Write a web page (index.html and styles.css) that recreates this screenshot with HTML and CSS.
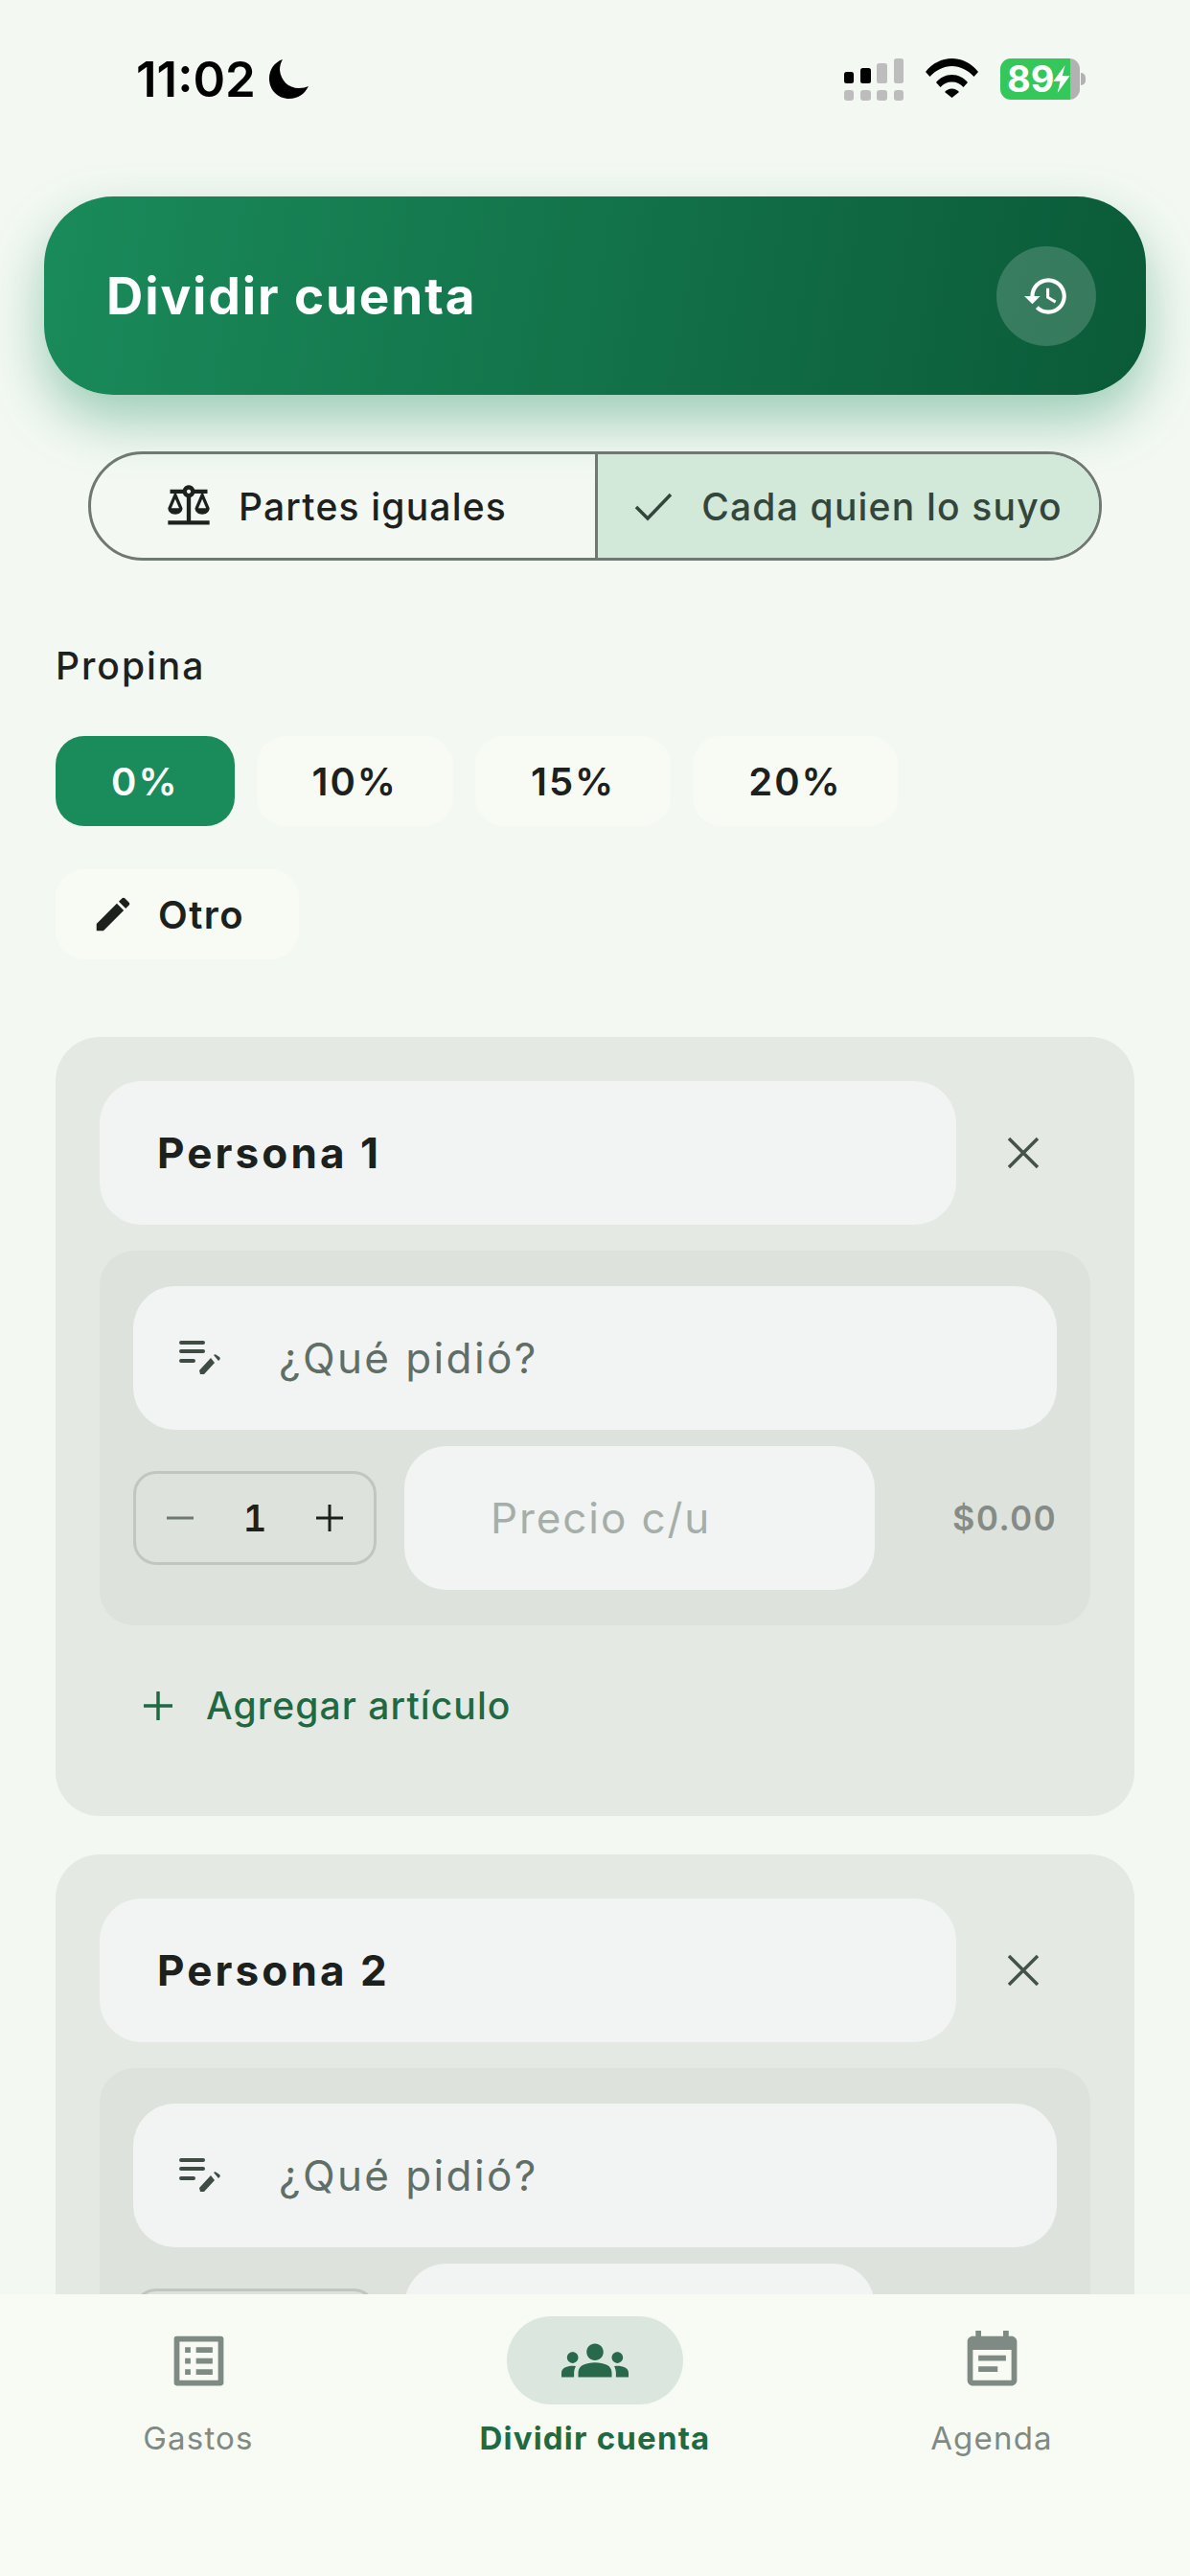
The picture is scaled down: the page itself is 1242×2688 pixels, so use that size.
FILE: index.html
```html
<!DOCTYPE html>
<html>
<head>
    <title>Dividir cuenta</title>
    <link rel="stylesheet" href="styles.css">
</head>
<body>
    <div class="page">
        <div class="status-bar">
            <div class="clock">
                <span>11:02</span>
                <svg class="moon" viewBox="0 0 41 41"><path d="M14 0C5 3 0 11 0 20c0 12 9 21 21 21 9 0 16-5 20-13-3 1-6 2-10 2C20 30 12 22 11 11c0-4 1-8 3-11z"/></svg>
            </div>
            <div class="status-icons">
                <svg class="signal" viewBox="0 0 62 44">
                    <rect x="0" y="14" width="10" height="12" rx="2.500" fill="#000"/>
                    <rect x="17" y="10" width="11" height="16" rx="2.500" fill="#000"/>
                    <rect x="34" y="5" width="11" height="21" rx="2.500" fill="#bdbdbd"/>
                    <rect x="52" y="0" width="10" height="26" rx="2.500" fill="#bdbdbd"/>
                    <rect x="0" y="33" width="10" height="11" rx="3" fill="#bdbdbd"/>
                    <rect x="17" y="33" width="11" height="11" rx="3" fill="#bdbdbd"/>
                    <rect x="34" y="33" width="11" height="11" rx="3" fill="#bdbdbd"/>
                    <rect x="52" y="33" width="10" height="11" rx="3" fill="#bdbdbd"/>
                </svg>
                <svg class="wifi" viewBox="0 0 55 41">
                    <path d="M0 14C7 5 17 0 27.500 0S48 5 55 14l-4.500 5C44 12 36 8 27.500 8S11 12 4.500 19z"/>
                    <path d="M11 25c4-5 10-8 16.500-8S40 20 44 25l-4.500 5c-3-3.500-7-5.500-12-5.500S18.500 26.500 15.500 30z"/>
                    <path d="M20 35c2-2 4.500-3.500 7.500-3.500S33 33 35 35l-7.500 6z"/>
                </svg>
                <div class="battery">
                    <div class="battery-body">
                        <span class="battery-level">89</span>
                        <svg class="bolt" viewBox="0 0 24 40"><path d="M17 0 0 23h10L6 40 24 15H13z"/></svg>
                    </div>
                    <div class="battery-nub"></div>
                </div>
            </div>
        </div>

        <div class="app-header">
            <h1>Dividir cuenta</h1>
            <div class="history-btn">
                <svg viewBox="0 0 24 24"><path d="M13 3c-4.970 0-9 4.030-9 9H1l4 4 4-4H6c0-3.870 3.130-7 7-7s7 3.130 7 7-3.130 7-7 7c-1.930 0-3.680-.79-4.940-2.060l-1.420 1.420C8.270 19.990 10.510 21 13 21c4.970 0 9-4.030 9-9s-4.030-9-9-9zm-1 5v5l4.280 2.540.72-1.210-3.500-2.080V8H12z"/></svg>
            </div>
        </div>

        <div class="mode-toggle">
            <div class="mode mode-left">
                <svg class="mode-icon" viewBox="0 0 24 24"><path fill-rule="evenodd" d="M13 7.830c.85-.3 1.530-.98 1.830-1.830H18l-3 7c0 1.660 1.570 3 3.500 3s3.500-1.340 3.500-3l-3-7h2V4h-6.170c-.41-1.170-1.520-2-2.830-2s-2.420.83-2.830 2H3v2h2l-3 7c0 1.660 1.570 3 3.500 3S9 14.660 9 13L6 6h3.170c.3.85.98 1.530 1.830 1.830V19H2v2h20v-2h-9V7.830zM20.370 13h-3.740l1.870-4.360L20.370 13zm-13 0H3.630L5.500 8.640 7.370 13zM12 6c-.55 0-1-.45-1-1s.45-1 1-1 1 .45 1 1-.45 1-1 1z"/></svg>
                <span>Partes iguales</span>
            </div>
            <div class="mode mode-active">
                <svg class="check-icon" viewBox="0 0 40 32"><path d="M2 17l12 12L38 4" fill="none" stroke="#33463c" stroke-width="3.500"/></svg>
                <span>Cada quien lo suyo</span>
            </div>
        </div>

        <div class="tip">
            <div class="tip-label">Propina</div>
            <div class="chips">
                <div class="chip chip-active">0%</div>
                <div class="chip">10%</div>
                <div class="chip">15%</div>
                <div class="chip">20%</div>
                <div class="chip chip-other">
                    <svg viewBox="0 0 24 24"><path d="M3 17.250V21h3.750L17.810 9.940l-3.750-3.750L3 17.250zM20.710 7.040c.39-.39.39-1.020 0-1.410l-2.340-2.340c-.39-.39-1.020-.39-1.410 0l-1.830 1.830 3.750 3.750 1.830-1.830z"/></svg>
                    <span>Otro</span>
                </div>
            </div>
        </div>

        <div class="person-card">
            <div class="name-row">
                <div class="name-field">Persona 1</div>
                <div class="remove-btn">
                    <svg viewBox="0 0 34 34"><path d="M2 2l30 30M32 2L2 32" fill="none" stroke="#45524b" stroke-width="3.500"/></svg>
                </div>
            </div>
            <div class="item-panel">
                <div class="item-field">
                    <svg class="note-icon" viewBox="0 0 44 38"><path d="M3 3h23M3 12h23M3 22h13" fill="none" stroke="#3e4c44" stroke-width="4" stroke-linecap="round"/><path d="M22 32l12-13 4 5-11 12h-4zM37 16c1-1 2-1 3 0l3 2c1 1 1 2 0 3l-1 1z" fill="#3e4c44"/></svg>
                    <span>¿Qué pidió?</span>
                </div>
                <div class="item-row">
                    <div class="stepper">
                        <svg class="step-icon" viewBox="0 0 28 28"><path d="M0 14h28" stroke="#6d7a73" stroke-width="3"/></svg>
                        <span>1</span>
                        <svg class="step-icon" viewBox="0 0 28 28"><path d="M0 14h28M14 0v28" stroke="#1c211e" stroke-width="3"/></svg>
                    </div>
                    <div class="price-field">Precio c/u</div>
                    <div class="item-total">$0.00</div>
                </div>
            </div>
            <div class="add-item">
                <svg viewBox="0 0 30 30"><path d="M0 15h30M15 0v30" stroke="#1f6a43" stroke-width="3.500"/></svg>
                <span>Agregar artículo</span>
            </div>
        </div>

        <div class="person-card">
            <div class="name-row">
                <div class="name-field">Persona 2</div>
                <div class="remove-btn">
                    <svg viewBox="0 0 34 34"><path d="M2 2l30 30M32 2L2 32" fill="none" stroke="#45524b" stroke-width="3.500"/></svg>
                </div>
            </div>
            <div class="item-panel">
                <div class="item-field">
                    <svg class="note-icon" viewBox="0 0 44 38"><path d="M3 3h23M3 12h23M3 22h13" fill="none" stroke="#3e4c44" stroke-width="4" stroke-linecap="round"/><path d="M22 32l12-13 4 5-11 12h-4zM37 16c1-1 2-1 3 0l3 2c1 1 1 2 0 3l-1 1z" fill="#3e4c44"/></svg>
                    <span>¿Qué pidió?</span>
                </div>
                <div class="item-row">
                    <div class="stepper"></div>
                    <div class="price-field"></div>
                </div>
            </div>
        </div>

        <div class="bottom-nav">
            <div class="nav-item">
                <div class="nav-icon">
                    <svg viewBox="0 0 24 24"><path d="M19 5v14H5V5h14m1.100-2H3.900c-.5 0-.9.4-.9.9v16.200c0 .4.4.9.9.9h16.200c.4 0 .9-.5.9-.9V3.900c0-.5-.5-.9-.9-.9zM11 7h6v2h-6V7zm0 4h6v2h-6v-2zm0 4h6v2h-6zM7 7h2v2H7zm0 4h2v2H7zm0 4h2v2H7z"/></svg>
                </div>
                <div class="nav-label">Gastos</div>
            </div>
            <div class="nav-item nav-active">
                <div class="nav-icon">
                    <svg viewBox="0 0 24 24"><path d="M12 12.750c1.630 0 3.070.39 4.240.9 1.080.48 1.760 1.560 1.760 2.730V18H6v-1.610c0-1.180.68-2.260 1.760-2.730 1.170-.52 2.610-.91 4.240-.91zM4 13c1.100 0 2-.9 2-2s-.9-2-2-2-2 .9-2 2 .9 2 2 2zm1.130 1.100C4.760 14.040 4.390 14 4 14c-.99 0-1.930.21-2.780.58C.48 14.900 0 15.620 0 16.430V18h4.500v-1.610c0-.83.23-1.610.63-2.290zM20 13c1.100 0 2-.9 2-2s-.9-2-2-2-2 .9-2 2 .9 2 2 2zm4 3.430c0-.81-.48-1.530-1.220-1.850-.85-.37-1.790-.58-2.780-.58-.39 0-.76.04-1.130.1.4.68.63 1.460.63 2.290V18H24v-1.570zM12 6c1.660 0 3 1.340 3 3s-1.340 3-3 3-3-1.340-3-3 1.340-3 3-3z"/></svg>
                </div>
                <div class="nav-label">Dividir cuenta</div>
            </div>
            <div class="nav-item">
                <div class="nav-icon">
                    <svg viewBox="0 0 24 24"><path d="M17 10H7v2h10v-2zm2-7h-1V1h-2v2H8V1H6v2H5c-1.110 0-1.990.9-1.990 2L3 19c0 1.100.89 2 2 2h14c1.100 0 2-.9 2-2V5c0-1.100-.9-2-2-2zm0 16H5V8h14v11zm-5-5H7v2h7v-2z"/></svg>
                </div>
                <div class="nav-label">Agenda</div>
            </div>
        </div>
    </div>
</body>
</html>
```

FILE: styles.css
```css
* {
    box-sizing: border-box;
}

body {
    font-family: Inter, "Liberation Sans", sans-serif;
    margin: 0;
    padding: 0;
    background-color: #f3f8f3;
    color: #1c211e;
}

.page {
    position: relative;
    width: 1242px;
    height: 2688px;
    overflow: hidden;
}

/* status bar */
.status-bar {
    height: 205px;
    padding: 58px 109px 0 142px;
    display: flex;
    justify-content: space-between;
    align-items: flex-start;
}

.clock {
    display: flex;
    align-items: center;
    gap: 14px;
    height: 48px;
    font-size: 51px;
    font-weight: 600;
    color: #000;
}

.moon {
    width: 41px;
    height: 41px;
}

.status-icons {
    display: flex;
    align-items: flex-start;
    gap: 23px;
    padding-top: 3px;
}

.signal {
    width: 62px;
    height: 44px;
}

.wifi {
    width: 55px;
    height: 41px;
}

.battery {
    display: flex;
    align-items: center;
    gap: 1px;
    height: 43px;
}

.battery-body {
    width: 83px;
    height: 43px;
    border-radius: 11px;
    background: linear-gradient(90deg, #34c759 88%, #b2b2b2 88%);
    display: flex;
    align-items: center;
    padding-left: 7px;
    color: #fff;
}

.battery-level {
    font-size: 38px;
    font-weight: 700;
    line-height: 43px;
}

.bolt {
    flex-shrink: 0;
    width: 20px;
    height: 29px;
    margin-left: -2px;
    fill: #fff;
}

.battery-nub {
    width: 5px;
    height: 13px;
    border-radius: 0 5px 5px 0;
    background-color: #b2b2b2;
}

/* header */
.app-header {
    height: 207px;
    margin: 0 46px;
    padding: 0 52px 0 65px;
    border-radius: 72px;
    background: linear-gradient(100deg, #1a8b5b 0%, #0b5a38 100%);
    box-shadow: 0 26px 56px rgba(26, 139, 91, 0.4);
    display: flex;
    justify-content: space-between;
    align-items: center;
}

.app-header h1 {
    margin: 0;
    font-size: 53px;
    font-weight: 700;
    color: #ffffff;
    letter-spacing: 1.9px;
}

.history-btn {
    width: 104px;
    height: 104px;
    border-radius: 50%;
    background-color: rgba(255, 255, 255, 0.18);
    display: flex;
    justify-content: center;
    align-items: center;
}

.history-btn svg {
    width: 50px;
    height: 50px;
    fill: #ffffff;
}

/* mode toggle */
.mode-toggle {
    height: 114px;
    margin: 59px 92px 0;
    border: 3px solid #6f7873;
    border-radius: 57px;
    overflow: hidden;
    display: flex;
}

.mode {
    flex: none;
    width: 50%;
    display: flex;
    justify-content: center;
    align-items: center;
    gap: 26px;
    font-size: 39px;
    font-weight: 500;
    letter-spacing: 1.2px;
}

.mode-left {
    padding-right: 16px;
}

.mode-active {
    border-left: 3px solid #6f7873;
    background-color: #d2e8d8;
    color: #33463c;
    gap: 30px;
}

.mode-icon {
    width: 52px;
    height: 52px;
    fill: #1c211e;
}

.check-icon {
    width: 40px;
    height: 32px;
}

/* tip */
.tip {
    padding: 0 58px;
    margin-top: 87px;
}

.tip-label {
    font-size: 39px;
    font-weight: 500;
    line-height: 46px;
    letter-spacing: 2px;
}

.chips {
    display: flex;
    flex-wrap: wrap;
    gap: 45px 23px;
    margin-top: 50px;
}

.chip {
    height: 94px;
    padding: 0 58px;
    border-radius: 30px;
    background-color: #f7fbf4;
    display: flex;
    align-items: center;
    gap: 24px;
    font-size: 40px;
    font-weight: 600;
    letter-spacing: 2px;
}

.chip-active {
    background-color: #1a8b5b;
    color: #ffffff;
}

.chip-other {
    flex-basis: 254px;
    flex-grow: 0;
    margin-right: 800px;
    padding: 0 37px;
    letter-spacing: 1.5px;
}

.chip-other svg {
    width: 46px;
    height: 46px;
    fill: #1c211e;
}

/* person cards */
.person-card {
    margin: 81px 58px 0;
    padding: 46px 46px 0;
    height: 813px;
    border-radius: 46px;
    background-color: #e4e9e3;
}

.person-card + .person-card {
    margin-top: 40px;
}

.name-row {
    display: flex;
    align-items: center;
}

.name-field {
    width: 894px;
    height: 150px;
    padding-left: 60px;
    border-radius: 44px;
    background-color: #f2f4f3;
    display: flex;
    align-items: center;
    font-size: 44px;
    font-weight: 700;
    letter-spacing: 3.1px;
}

.remove-btn {
    flex: 1;
    display: flex;
    justify-content: center;
}

.remove-btn svg {
    width: 34px;
    height: 34px;
}

.item-panel {
    margin-top: 27px;
    padding: 37px 35px;
    border-radius: 36px;
    background-color: #dde2dc;
}

.item-field {
    height: 150px;
    padding-left: 47px;
    border-radius: 44px;
    background-color: #f2f4f3;
    display: flex;
    align-items: center;
    gap: 61px;
    font-size: 44px;
    letter-spacing: 2.4px;
    color: #5f6f68;
}

.note-icon {
    width: 44px;
    height: 38px;
}

.item-row {
    display: flex;
    align-items: center;
    margin-top: 17px;
}

.stepper {
    width: 254px;
    height: 98px;
    padding: 0 32px;
    border: 3px solid #c0c7c0;
    border-radius: 24px;
    display: flex;
    justify-content: space-between;
    align-items: center;
    font-size: 38px;
    font-weight: 600;
    font-variant-numeric: tabular-nums;
    color: #1c211e;
}

.step-icon {
    width: 28px;
    height: 28px;
}

.price-field {
    width: 491px;
    height: 150px;
    margin-left: 29px;
    padding-left: 90px;
    border-radius: 44px;
    background-color: #f2f4f3;
    display: flex;
    align-items: center;
    font-size: 44px;
    letter-spacing: 1.9px;
    color: #a6aeaa;
}

.item-total {
    flex: 1;
    text-align: right;
    font-size: 36px;
    font-weight: 600;
    font-variant-numeric: tabular-nums;
    letter-spacing: 1.2px;
    color: #858c87;
}

.add-item {
    display: flex;
    align-items: center;
    gap: 35px;
    margin-top: 60px;
    padding-left: 46px;
    font-size: 39px;
    font-weight: 500;
    letter-spacing: 1.1px;
    color: #1f6a43;
}

.add-item svg {
    width: 30px;
    height: 30px;
}

/* bottom nav */
.bottom-nav {
    position: absolute;
    left: 0;
    right: 0;
    bottom: 0;
    height: 294px;
    padding-top: 23px;
    background-color: #f7fbf4;
    display: grid;
    grid-template-columns: repeat(3, 414px);
}

.nav-item {
    display: flex;
    flex-direction: column;
    align-items: center;
}

.nav-icon {
    width: 184px;
    height: 92px;
    border-radius: 46px;
    display: flex;
    justify-content: center;
    align-items: center;
}

.nav-icon svg {
    width: 69px;
    height: 69px;
    fill: #7f8a84;
}

.nav-label {
    margin-top: 15px;
    font-size: 33px;
    line-height: 40px;
    font-weight: 400;
    letter-spacing: 1.2px;
    color: #7f8a84;
}

.nav-active .nav-icon {
    background-color: #dbe7de;
}

.nav-active .nav-icon svg {
    width: 70px;
    height: 70px;
    fill: #27694a;
}

.nav-active .nav-label {
    font-weight: 700;
    color: #1f6a43;
}
```
